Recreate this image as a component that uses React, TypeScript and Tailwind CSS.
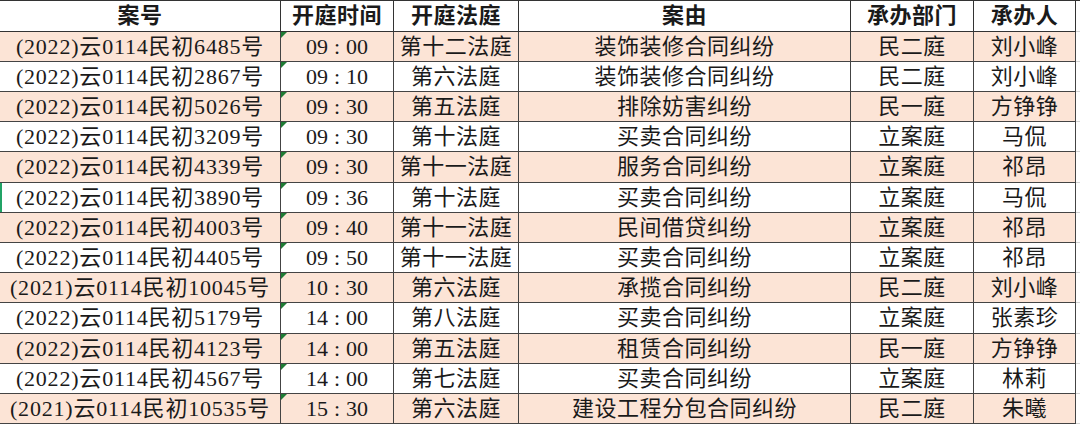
import React from "react";

const rows: [string, string, string, string, string, string][] = [
  ["(2022)云0114民初6485号", "09:00", "第十二法庭", "装饰装修合同纠纷", "民二庭", "刘小峰"],
  ["(2022)云0114民初2867号", "09:10", "第六法庭", "装饰装修合同纠纷", "民二庭", "刘小峰"],
  ["(2022)云0114民初5026号", "09:30", "第五法庭", "排除妨害纠纷", "民一庭", "方铮铮"],
  ["(2022)云0114民初3209号", "09:30", "第十法庭", "买卖合同纠纷", "立案庭", "马侃"],
  ["(2022)云0114民初4339号", "09:30", "第十一法庭", "服务合同纠纷", "立案庭", "祁昂"],
  ["(2022)云0114民初3890号", "09:36", "第十法庭", "买卖合同纠纷", "立案庭", "马侃"],
  ["(2022)云0114民初4003号", "09:40", "第十一法庭", "民间借贷纠纷", "立案庭", "祁昂"],
  ["(2022)云0114民初4405号", "09:50", "第十一法庭", "买卖合同纠纷", "立案庭", "祁昂"],
  ["(2021)云0114民初10045号", "10:30", "第六法庭", "承揽合同纠纷", "民二庭", "刘小峰"],
  ["(2022)云0114民初5179号", "14:00", "第八法庭", "买卖合同纠纷", "立案庭", "张素珍"],
  ["(2022)云0114民初4123号", "14:00", "第五法庭", "租赁合同纠纷", "民一庭", "方铮铮"],
  ["(2022)云0114民初4567号", "14:00", "第七法庭", "买卖合同纠纷", "立案庭", "林莉"],
  ["(2021)云0114民初10535号", "15:30", "第六法庭", "建设工程分包合同纠纷", "民二庭", "朱曦"],
];

const headers = ["案号", "开庭时间", "开庭法庭", "案由", "承办部门", "承办人"];

const widths = ["w-[281px]", "w-[113px]", "w-[125px]", "w-[332px]", "w-[123px]", "w-[102px]"];

function Time({ t }: { t: string }) {
  const [a, b] = t.split(":");
  return (
    <span>
      {a}
      <span className="px-[6px]">:</span>
      {b}
    </span>
  );
}

export default function App() {
  return (
    <div
      className="w-[1080px] h-[428px] bg-white overflow-hidden text-[#1a1a1a]"
      style={{ fontFamily: '"Liberation Serif", "Noto Sans CJK SC", serif' }}
    >
      <div className="flex h-[32px] border-t border-[#333]">
        {headers.map((h, i) => (
          <div
            key={h}
            className={`${widths[i]} shrink-0 flex items-center justify-center border-b border-r border-[#333] text-[22px] font-semibold leading-none tracking-[0.5px]`}
          >
            {h}
          </div>
        ))}
        <div className="flex-1 border-b border-[#d4d4d4]" />
      </div>
      {rows.map((r, ri) => {
        const pink = ri % 2 === 0;
        const h = ri === 4 || ri === 9 ? "h-[31px]" : "h-[30px]";
        return (
          <div key={ri} className={`flex ${h}`}>
            {r.map((c, ci) => (
              <div
                key={ci}
                className={`${widths[ci]} shrink-0 relative flex items-center justify-center border-b border-r border-[#444] text-[22px] leading-none ${
                  pink ? "bg-[#fce4d6]" : "bg-white"
                }`}
              >
                {ci === 0 && ri === 5 && (
                  <div className="absolute left-0 top-0 bottom-0 w-[2px] bg-[#21a366]" />
                )}
                {ci === 1 && (
                  <div className="absolute left-0 top-0 w-0 h-0 border-t-[6px] border-r-[6px] border-t-[#1e7b34] border-r-transparent" />
                )}
                {ci === 1 ? (
                  <Time t={c} />
                ) : (
                  <span className={ci === 0 ? "tracking-[0.8px]" : "tracking-[0.5px]"}>{c}</span>
                )}
              </div>
            ))}
            <div className="flex-1 border-b border-[#d4d4d4]" />
          </div>
        );
      })}
    </div>
  );
}
